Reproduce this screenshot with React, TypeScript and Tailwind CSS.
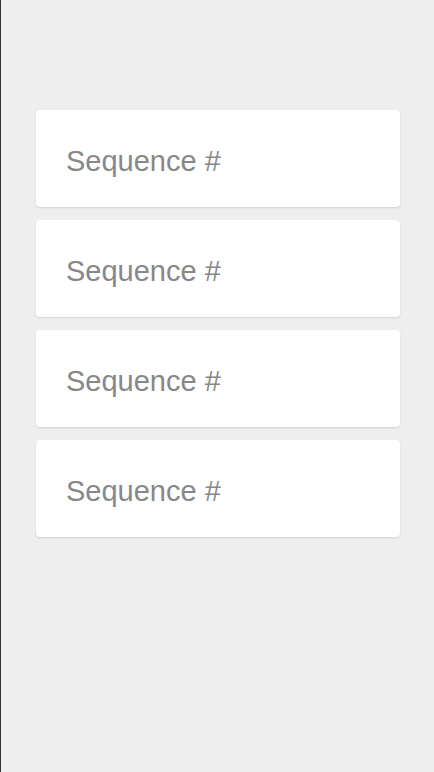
export default function App() {
  return (
    <div className="w-[434px] h-[772px] bg-[#eeeeee] border-l border-[#333333] pt-[110px] pl-[35px] pr-[34px] flex flex-col gap-[13px]" style={{ fontFamily: '"Liberation Sans", Arial, sans-serif' }}>
      {[0, 1, 2, 3].map((i) => (
        <div key={i} className="h-[97px] bg-white rounded-[4px] shadow-[0_1px_2px_rgba(0,0,0,0.12)] flex items-center pl-[30px]">
          <span className="text-[29px] text-[#878787] leading-none pt-[5px]">Sequence #</span>
        </div>
      ))}
    </div>
  );
}
